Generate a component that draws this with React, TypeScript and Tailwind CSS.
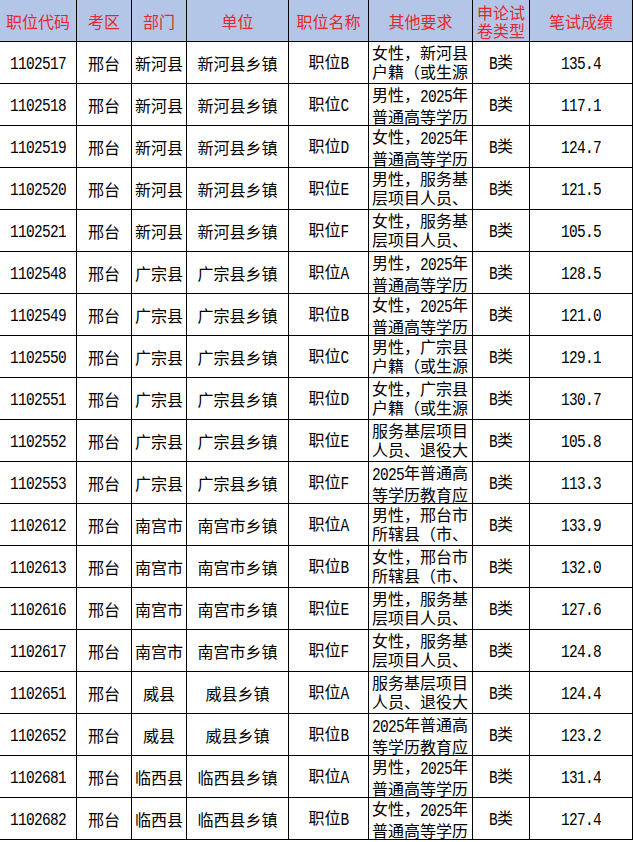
import React from "react";

type Row = [string, string, string, string, string, string[], string, string];

const R1 = ["女性，新河县", "户籍（或生源", "地）人员"];
const M25 = (g: string) => [g + "性，2025年", "普通高等学历", "教育应届毕业"];
const FW = (g: string) => [g + "性，服务基", "层项目人员、", "退役大学生士"];
const HJ = (g: string, c: string) => [g + "性，" + c, "户籍（或生源", "地）人员"];
const FWB = ["服务基层项目", "人员、退役大", "学生士兵"];
const P25 = ["2025年普通高", "等学历教育应", "届毕业生"];
const XT = (g: string) => [g + "性，邢台市", "所辖县（市、", "区）户籍"];

const rows: Row[] = [
  ["1102517", "邢台", "新河县", "新河县乡镇", "职位B", R1, "B类", "135.4"],
  ["1102518", "邢台", "新河县", "新河县乡镇", "职位C", M25("男"), "B类", "117.1"],
  ["1102519", "邢台", "新河县", "新河县乡镇", "职位D", M25("女"), "B类", "124.7"],
  ["1102520", "邢台", "新河县", "新河县乡镇", "职位E", FW("男"), "B类", "121.5"],
  ["1102521", "邢台", "新河县", "新河县乡镇", "职位F", FW("女"), "B类", "105.5"],
  ["1102548", "邢台", "广宗县", "广宗县乡镇", "职位A", M25("男"), "B类", "128.5"],
  ["1102549", "邢台", "广宗县", "广宗县乡镇", "职位B", M25("女"), "B类", "121.0"],
  ["1102550", "邢台", "广宗县", "广宗县乡镇", "职位C", HJ("男", "广宗县"), "B类", "129.1"],
  ["1102551", "邢台", "广宗县", "广宗县乡镇", "职位D", HJ("女", "广宗县"), "B类", "130.7"],
  ["1102552", "邢台", "广宗县", "广宗县乡镇", "职位E", FWB, "B类", "105.8"],
  ["1102553", "邢台", "广宗县", "广宗县乡镇", "职位F", P25, "B类", "113.3"],
  ["1102612", "邢台", "南宫市", "南宫市乡镇", "职位A", XT("男"), "B类", "133.9"],
  ["1102613", "邢台", "南宫市", "南宫市乡镇", "职位B", XT("女"), "B类", "132.0"],
  ["1102616", "邢台", "南宫市", "南宫市乡镇", "职位E", FW("男"), "B类", "127.6"],
  ["1102617", "邢台", "南宫市", "南宫市乡镇", "职位F", FW("女"), "B类", "124.8"],
  ["1102651", "邢台", "威县", "威县乡镇", "职位A", FWB, "B类", "124.4"],
  ["1102652", "邢台", "威县", "威县乡镇", "职位B", P25, "B类", "123.2"],
  ["1102681", "邢台", "临西县", "临西县乡镇", "职位A", M25("男"), "B类", "131.4"],
  ["1102682", "邢台", "临西县", "临西县乡镇", "职位B", M25("女"), "B类", "127.4"],
];

function T(s: string) {
  return s.split(/([A-Za-z0-9.]+)/).map((p, i) =>
    /^[A-Za-z0-9.]+$/.test(p) ? (
      <span
        key={i}
        className="inline-block font-['Liberation_Mono'] text-[14.5px] tracking-[-0.7px] scale-y-[1.3]"
      >
        {p}
      </span>
    ) : (
      <React.Fragment key={i}>{p}</React.Fragment>
    )
  );
}

const cell =
  "h-[42px] border-r border-b border-black flex items-center justify-center overflow-hidden whitespace-nowrap";

const headers = ["职位代码", "考区", "部门", "单位", "职位名称", "其他要求"];

export default function App() {
  return (
    <div className="w-[633px] h-[842px] bg-white font-['Noto_Sans_CJK_SC',sans-serif] text-[16px] text-black">
      <div className="grid grid-cols-[77px_55px_55px_102px_80px_104px_57px_103px]">
        {headers.map((h) => (
          <div key={h} className={cell + " bg-[#b4c6e7] text-[#e5272d]"}>
            {h}
          </div>
        ))}
        <div className={cell + " bg-[#b4c6e7] text-[#e5272d] flex-col leading-[18px]"}>
          <div>申论试</div>
          <div>卷类型</div>
        </div>
        <div className={cell + " bg-[#b4c6e7] text-[#e5272d]"}>笔试成绩</div>

        {rows.map((r) => (
          <React.Fragment key={r[0]}>
            <div className={cell}>
              <span>{T(r[0])}</span>
            </div>
            <div className={cell}>
              <span>{r[1]}</span>
            </div>
            <div className={cell}>
              <span>{r[2]}</span>
            </div>
            <div className={cell}>
              <span>{r[3]}</span>
            </div>
            <div className={cell}>
              <span>{T(r[4])}</span>
            </div>
            <div className="h-[42px] border-r border-b border-black overflow-hidden whitespace-nowrap pl-[3px] pt-[1px] leading-[19px]">
              {r[5].map((l, i) => (
                <div key={i}>{T(l)}</div>
              ))}
            </div>
            <div className={cell}>
              <span>{T(r[6])}</span>
            </div>
            <div className={cell}>
              <span>{T(r[7])}</span>
            </div>
          </React.Fragment>
        ))}
      </div>
    </div>
  );
}
